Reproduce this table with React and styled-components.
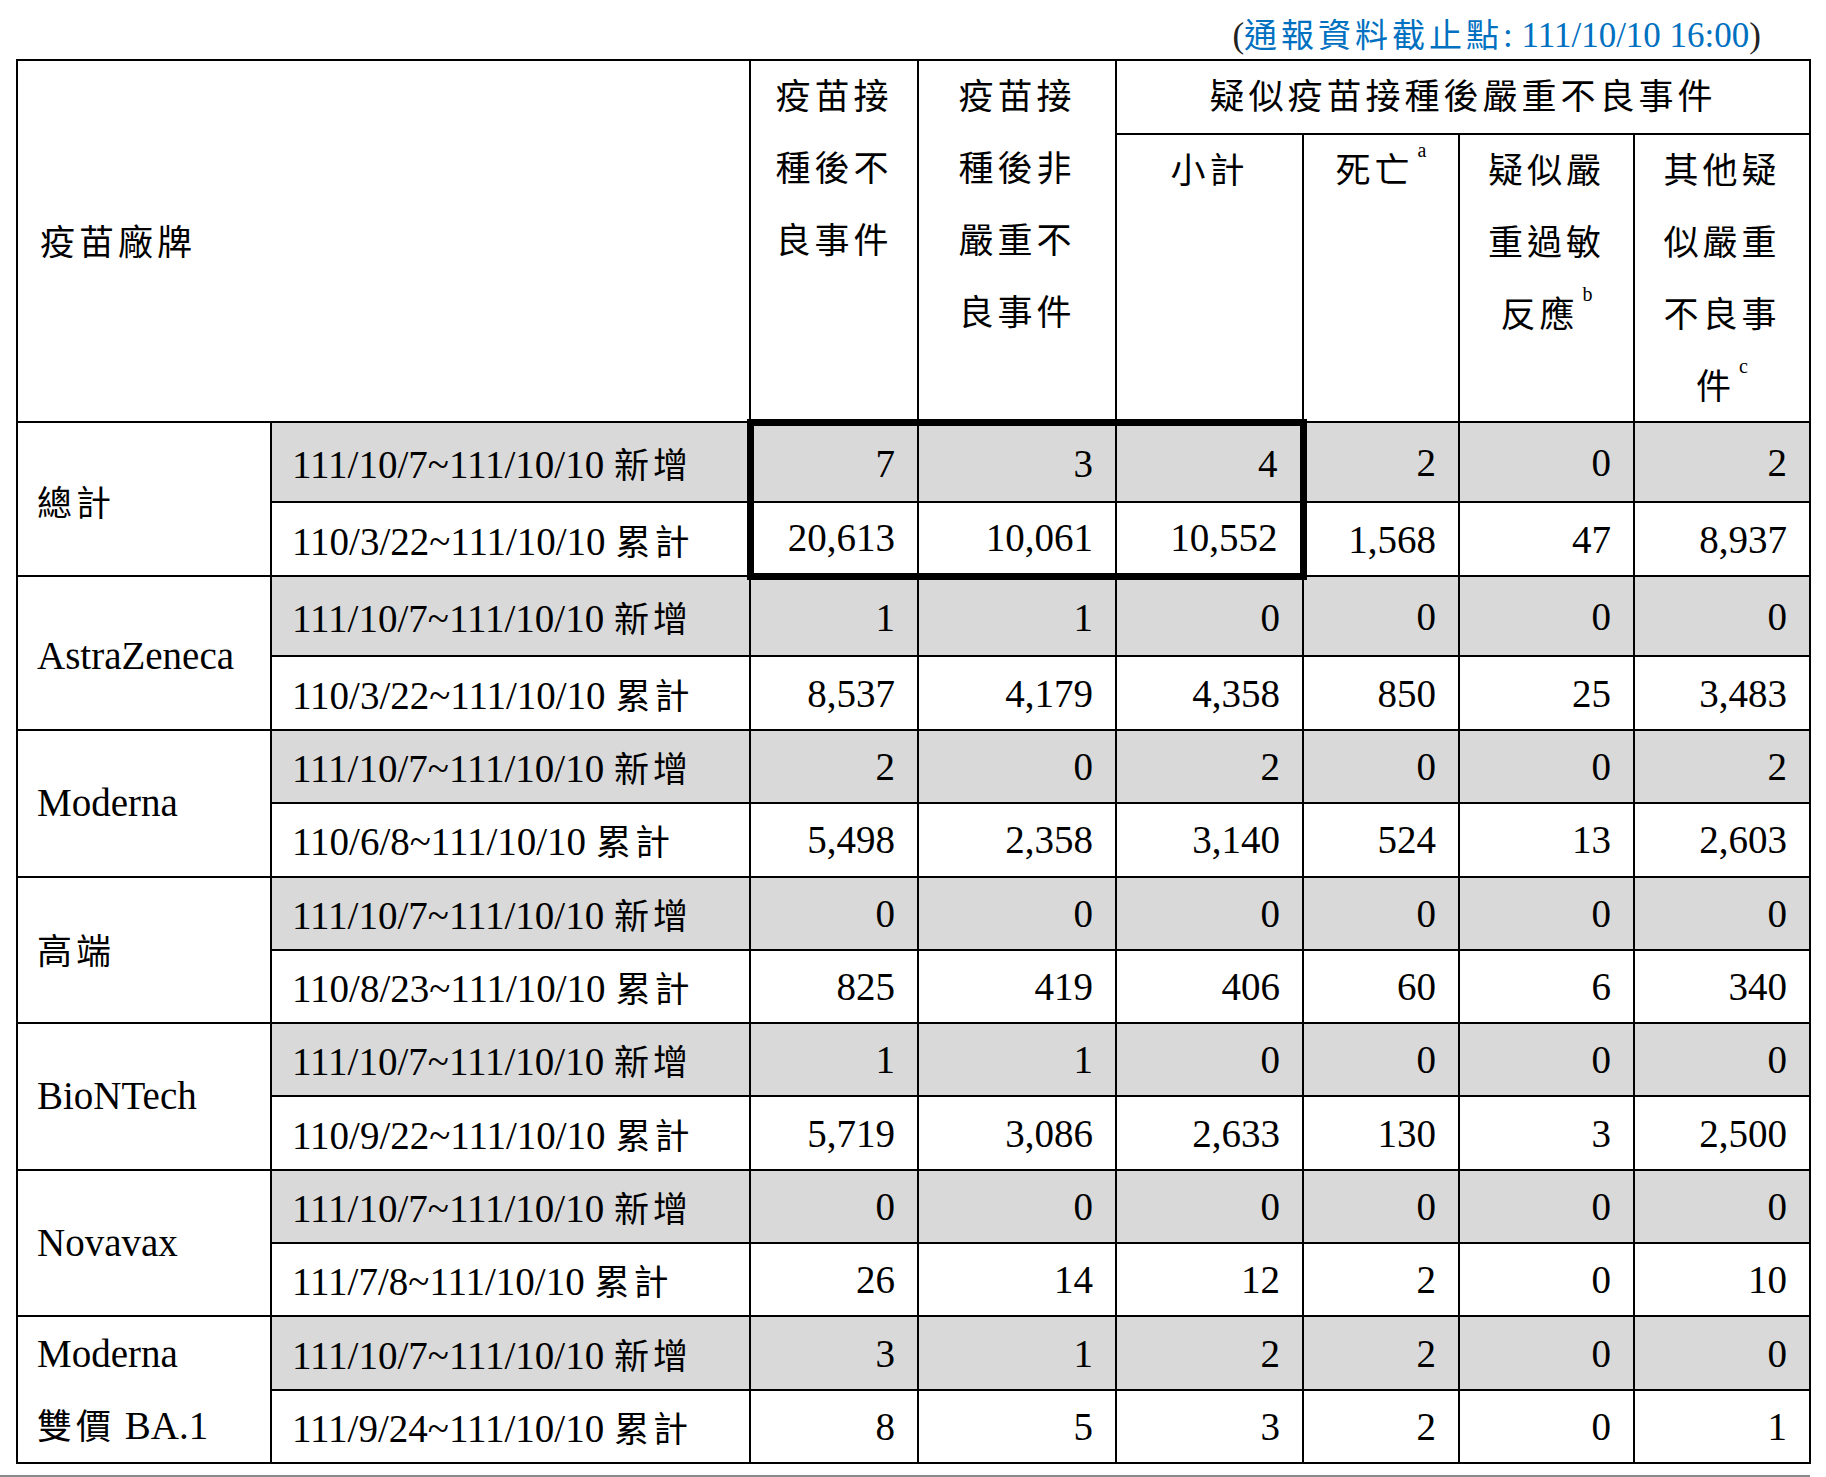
import React from "react";
import styled, { createGlobalStyle } from "styled-components";

const GlobalStyle = createGlobalStyle`
  html, body {
    margin: 0;
    padding: 0;
    background: #fff;
  }
  body {
    font-family: "Liberation Serif", "Noto Sans CJK TC", serif;
    color: #000;
  }
`;

const Page = styled.div`
  width: 1826px;
  height: 1477px;
  padding-left: 16px;
  box-sizing: border-box;
  overflow: hidden;
`;

const Caption = styled.div`
  width: 1793px;
  height: 59px;
  box-sizing: border-box;
  padding: 13px 48px 0 0;
  text-align: right;
  font-size: 35px;
  line-height: 40px;
  color: #0070c0;
  white-space: nowrap;
`;

const Paren = styled.span`
  color: #222;
`;

const Han = styled.span`
  font-family: "Noto Sans CJK TC", sans-serif;
  font-size: ${(p) => p.$size || 35}px;
  letter-spacing: 4px;
`;

const Sup = styled.span`
  font-family: "Liberation Serif", serif;
  font-size: 20px;
  line-height: 36px;
  letter-spacing: 0;
  vertical-align: top;
  margin-left: 4px;
`;

const Table = styled.table`
  width: 1793px;
  table-layout: fixed;
  border-collapse: collapse;
  font-size: 39px;
`;

const HeadRow = styled.tr`
  height: ${(p) => p.$h}px;
`;

const HeadCell = styled.th`
  border: 2px solid #000;
  padding: 0 0 0 ${(p) => (p.$left ? 22 : 0)}px;
  font-family: "Noto Sans CJK TC", sans-serif;
  font-size: 35px;
  font-weight: normal;
  letter-spacing: 4px;
  text-align: ${(p) => (p.$left ? "left" : "center")};
  vertical-align: ${(p) => (p.$middle ? "middle" : "top")};
  line-height: 72px;
`;

/* the CJK face sits a little low in its line box, lift it */
const Lines = styled.span`
  display: block;
  margin-top: -3px;
`;

const Row = styled.tr`
  height: ${(p) => p.$h}px;
`;

const BrandCell = styled.td`
  border: 2px solid #000;
  padding: ${(p) => p.$drop || 0}px 0 0 19px;
  line-height: 70px;
  vertical-align: middle;
  background: #fff;
  white-space: nowrap;
`;

const PeriodCell = styled.td`
  border: 2px solid #000;
  padding: 0 0 0 20px;
  vertical-align: middle;
  white-space: nowrap;
  background: ${(p) => (p.$shade ? "#d9d9d9" : "#fff")};
`;

const NumCell = styled.td`
  border: 2px solid #000;
  border-top-width: ${(p) => (p.$top ? 7 : 2)}px;
  border-bottom-width: ${(p) => (p.$bottom ? 7 : 2)}px;
  border-left-width: ${(p) => (p.$leftEdge ? 7 : 2)}px;
  border-right-width: ${(p) => (p.$rightEdge ? 7 : 2)}px;
  padding: 0 22px 0 0;
  text-align: right;
  vertical-align: middle;
  background: ${(p) => (p.$shade ? "#d9d9d9" : "#fff")};
`;

const Cutoff = styled.div`
  margin: 11px 0 0 -16px;
  width: 1810px;
  border-top: 2px solid #8a8a8a;
`;

const widths = [254, 479, 168, 198, 187, 156, 175, 176];

const groups = [
  {
    brand: <Han>總計</Han>,
    from: "110/3/22",
    added: ["7", "3", "4", "2", "0", "2"],
    total: ["20,613", "10,061", "10,552", "1,568", "47", "8,937"],
    boxed: true,
    h: [80, 74],
    drop: 6,
  },
  {
    brand: "AstraZeneca",
    from: "110/3/22",
    added: ["1", "1", "0", "0", "0", "0"],
    total: ["8,537", "4,179", "4,358", "850", "25", "3,483"],
    h: [80, 74],
    drop: 6,
  },
  {
    brand: "Moderna",
    from: "110/6/8",
    added: ["2", "0", "2", "0", "0", "2"],
    total: ["5,498", "2,358", "3,140", "524", "13", "2,603"],
  },
  {
    brand: <Han>高端</Han>,
    from: "110/8/23",
    added: ["0", "0", "0", "0", "0", "0"],
    total: ["825", "419", "406", "60", "6", "340"],
  },
  {
    brand: "BioNTech",
    from: "110/9/22",
    added: ["1", "1", "0", "0", "0", "0"],
    total: ["5,719", "3,086", "2,633", "130", "3", "2,500"],
  },
  {
    brand: "Novavax",
    from: "111/7/8",
    added: ["0", "0", "0", "0", "0", "0"],
    total: ["26", "14", "12", "2", "0", "10"],
  },
  {
    brand: (
      <>
        Moderna
        <br />
        <Han>雙價</Han> BA.1
      </>
    ),
    from: "111/9/24",
    added: ["3", "1", "2", "2", "0", "0"],
    total: ["8", "5", "3", "2", "0", "1"],
  },
];

const numCells = (values, shade, boxed, isTop) =>
  values.map((v, i) => {
    const inBox = boxed && i < 3;
    return (
      <NumCell
        key={i}
        $shade={shade}
        $top={inBox && isTop}
        $bottom={inBox && !isTop}
        $leftEdge={inBox && i === 0}
        $rightEdge={inBox && i === 2}
      >
        {v}
      </NumCell>
    );
  });

const App = () => {
  return (
    <Page>
      <GlobalStyle />
      <Caption>
        <Paren>(</Paren>
        <Han $size={33}>通報資料截止點</Han>: 111/10/10 16:00
        <Paren>)</Paren>
      </Caption>

      <Table>
        <colgroup>
          {widths.map((w, i) => (
            <col key={i} style={{ width: w }} />
          ))}
        </colgroup>
        <thead>
          <HeadRow $h={74}>
            <HeadCell colSpan={2} rowSpan={2} $left $middle>
              <Lines>疫苗廠牌</Lines>
            </HeadCell>
            <HeadCell rowSpan={2}>
              <Lines>
                疫苗接
                <br />
                種後不
                <br />
                良事件
              </Lines>
            </HeadCell>
            <HeadCell rowSpan={2}>
              <Lines>
                疫苗接
                <br />
                種後非
                <br />
                嚴重不
                <br />
                良事件
              </Lines>
            </HeadCell>
            <HeadCell colSpan={4}>
              <Lines>疑似疫苗接種後嚴重不良事件</Lines>
            </HeadCell>
          </HeadRow>
          <HeadRow $h={288}>
            <HeadCell>
              <Lines>小計</Lines>
            </HeadCell>
            <HeadCell>
              <Lines>
                死亡
                <Sup>a</Sup>
              </Lines>
            </HeadCell>
            <HeadCell>
              <Lines>
                疑似嚴
                <br />
                重過敏
                <br />
                反應
                <Sup>b</Sup>
              </Lines>
            </HeadCell>
            <HeadCell>
              <Lines>
                其他疑
                <br />
                似嚴重
                <br />
                不良事
                <br />件
                <Sup>c</Sup>
              </Lines>
            </HeadCell>
          </HeadRow>
        </thead>
        <tbody>
          {groups.map((g, gi) => (
            <React.Fragment key={gi}>
              <Row $h={g.h ? g.h[0] : 73.3}>
                <BrandCell rowSpan={2} $drop={g.drop}>
                  {g.brand}
                </BrandCell>
                <PeriodCell $shade>
                  111/10/7~111/10/10 <Han>新增</Han>
                </PeriodCell>
                {numCells(g.added, true, g.boxed, true)}
              </Row>
              <Row $h={g.h ? g.h[1] : 73.3}>
                <PeriodCell>
                  {g.from}~111/10/10 <Han>累計</Han>
                </PeriodCell>
                {numCells(g.total, false, g.boxed, false)}
              </Row>
            </React.Fragment>
          ))}
        </tbody>
      </Table>
      <Cutoff />
    </Page>
  );
};

export default App;
